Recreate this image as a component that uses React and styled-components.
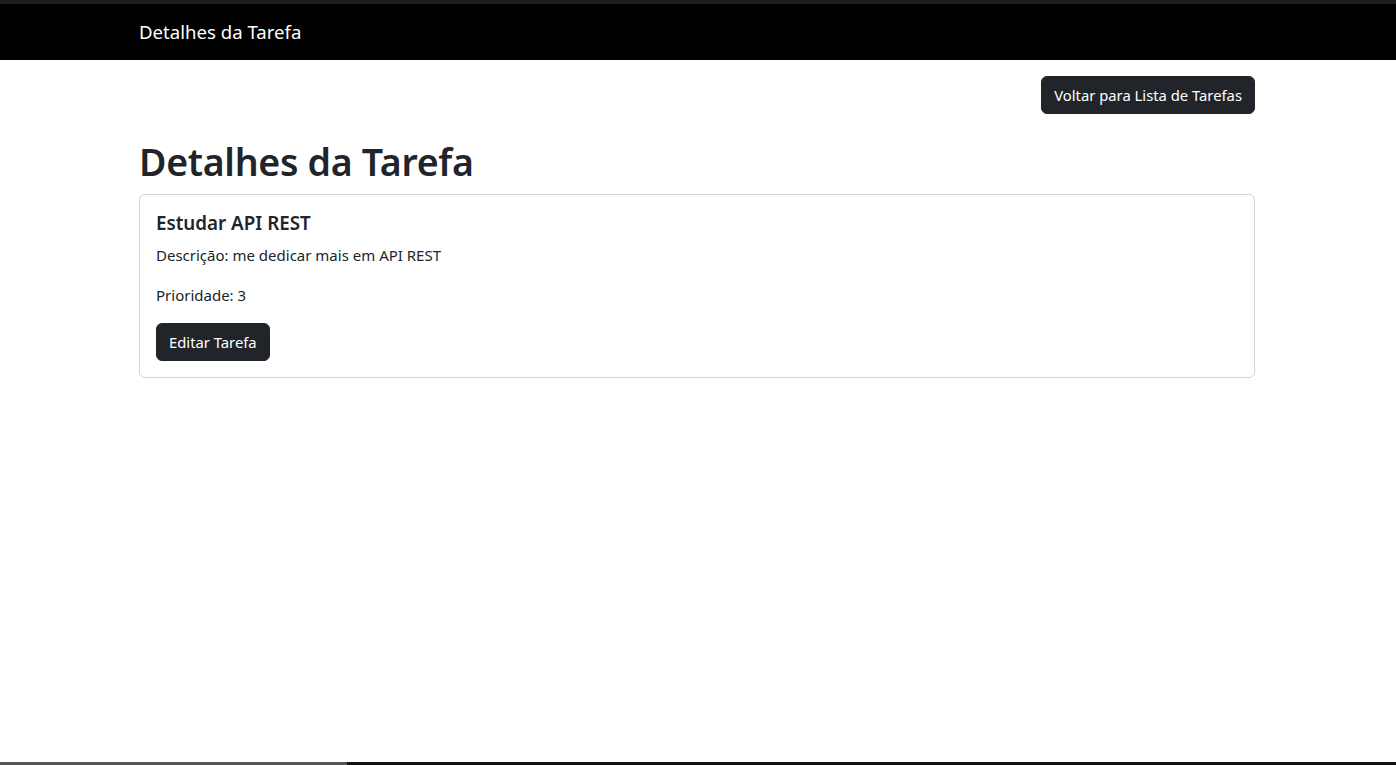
import React from "react";
import styled, { createGlobalStyle } from "styled-components";

const Global = createGlobalStyle`
  html, body { margin: 0; padding: 0; background: #fff; }
  body {
    font-family: "Noto Sans", "Open Sans", sans-serif;
    font-size: 16px;
    line-height: 1.5;
    color: #212529;
  }
  * { box-sizing: border-box; }
`;

const TopStrip = styled.div`
  height: 4px;
  background: #1e1e1e;
`;

const Navbar = styled.nav`
  background: #000;
  padding: 8px 0;
`;

const Container = styled.div`
  width: 1140px;
  margin-left: calc(50% - 571px);
  padding: 0 12px;
`;

const Brand = styled.span`
  display: block;
  color: #fff;
  font-size: 18.6px;
  line-height: 40px;
  height: 40px;
`;

const Toolbar = styled.div`
  display: flex;
  justify-content: flex-end;
  margin-top: 16px;
  margin-bottom: 24px;
`;

const Button = styled.button`
  font-family: inherit;
  font-size: 14.8px;
  line-height: 24px;
  color: #fff;
  background: #212529;
  border: 1px solid #212529;
  border-radius: 6px;
  padding: 6px 12px;
  cursor: pointer;
`;

const Heading = styled.h1`
  margin: 0 0 8px;
  font-size: 37.5px;
  font-weight: 600;
  line-height: 48px;
  letter-spacing: -0.3px;
`;

const Card = styled.div`
  border: 1px solid rgba(0, 0, 0, 0.175);
  border-radius: 6px;
  padding: 16px;
`;

const CardTitle = styled.h5`
  margin: 0 0 8px;
  font-size: 18.8px;
  font-weight: 600;
  line-height: 24px;
`;

const Text = styled.p`
  margin: 0 0 16px;
  font-size: 15px;
  line-height: 24px;
`;

const BottomBar = styled.div`
  position: fixed;
  left: 0;
  right: 0;
  bottom: 0;
  height: 3px;
  background: #111;
`;

const BottomProgress = styled.div`
  height: 100%;
  background: #555;
`;

export default function App() {
  return (
    <>
      <Global />
      <TopStrip />
      <Navbar>
        <Container>
          <Brand>Detalhes da Tarefa</Brand>
        </Container>
      </Navbar>
      <Container>
        <Toolbar>
          <Button>Voltar para Lista de Tarefas</Button>
        </Toolbar>
        <Heading>Detalhes da Tarefa</Heading>
        <Card>
          <CardTitle>Estudar API REST</CardTitle>
          <Text>Descrição: me dedicar mais em API REST</Text>
          <Text>Prioridade: 3</Text>
          <Button>Editar Tarefa</Button>
        </Card>
      </Container>
      <BottomBar>
        <BottomProgress style={{ width: "347px" }} />
      </BottomBar>
    </>
  );
}
